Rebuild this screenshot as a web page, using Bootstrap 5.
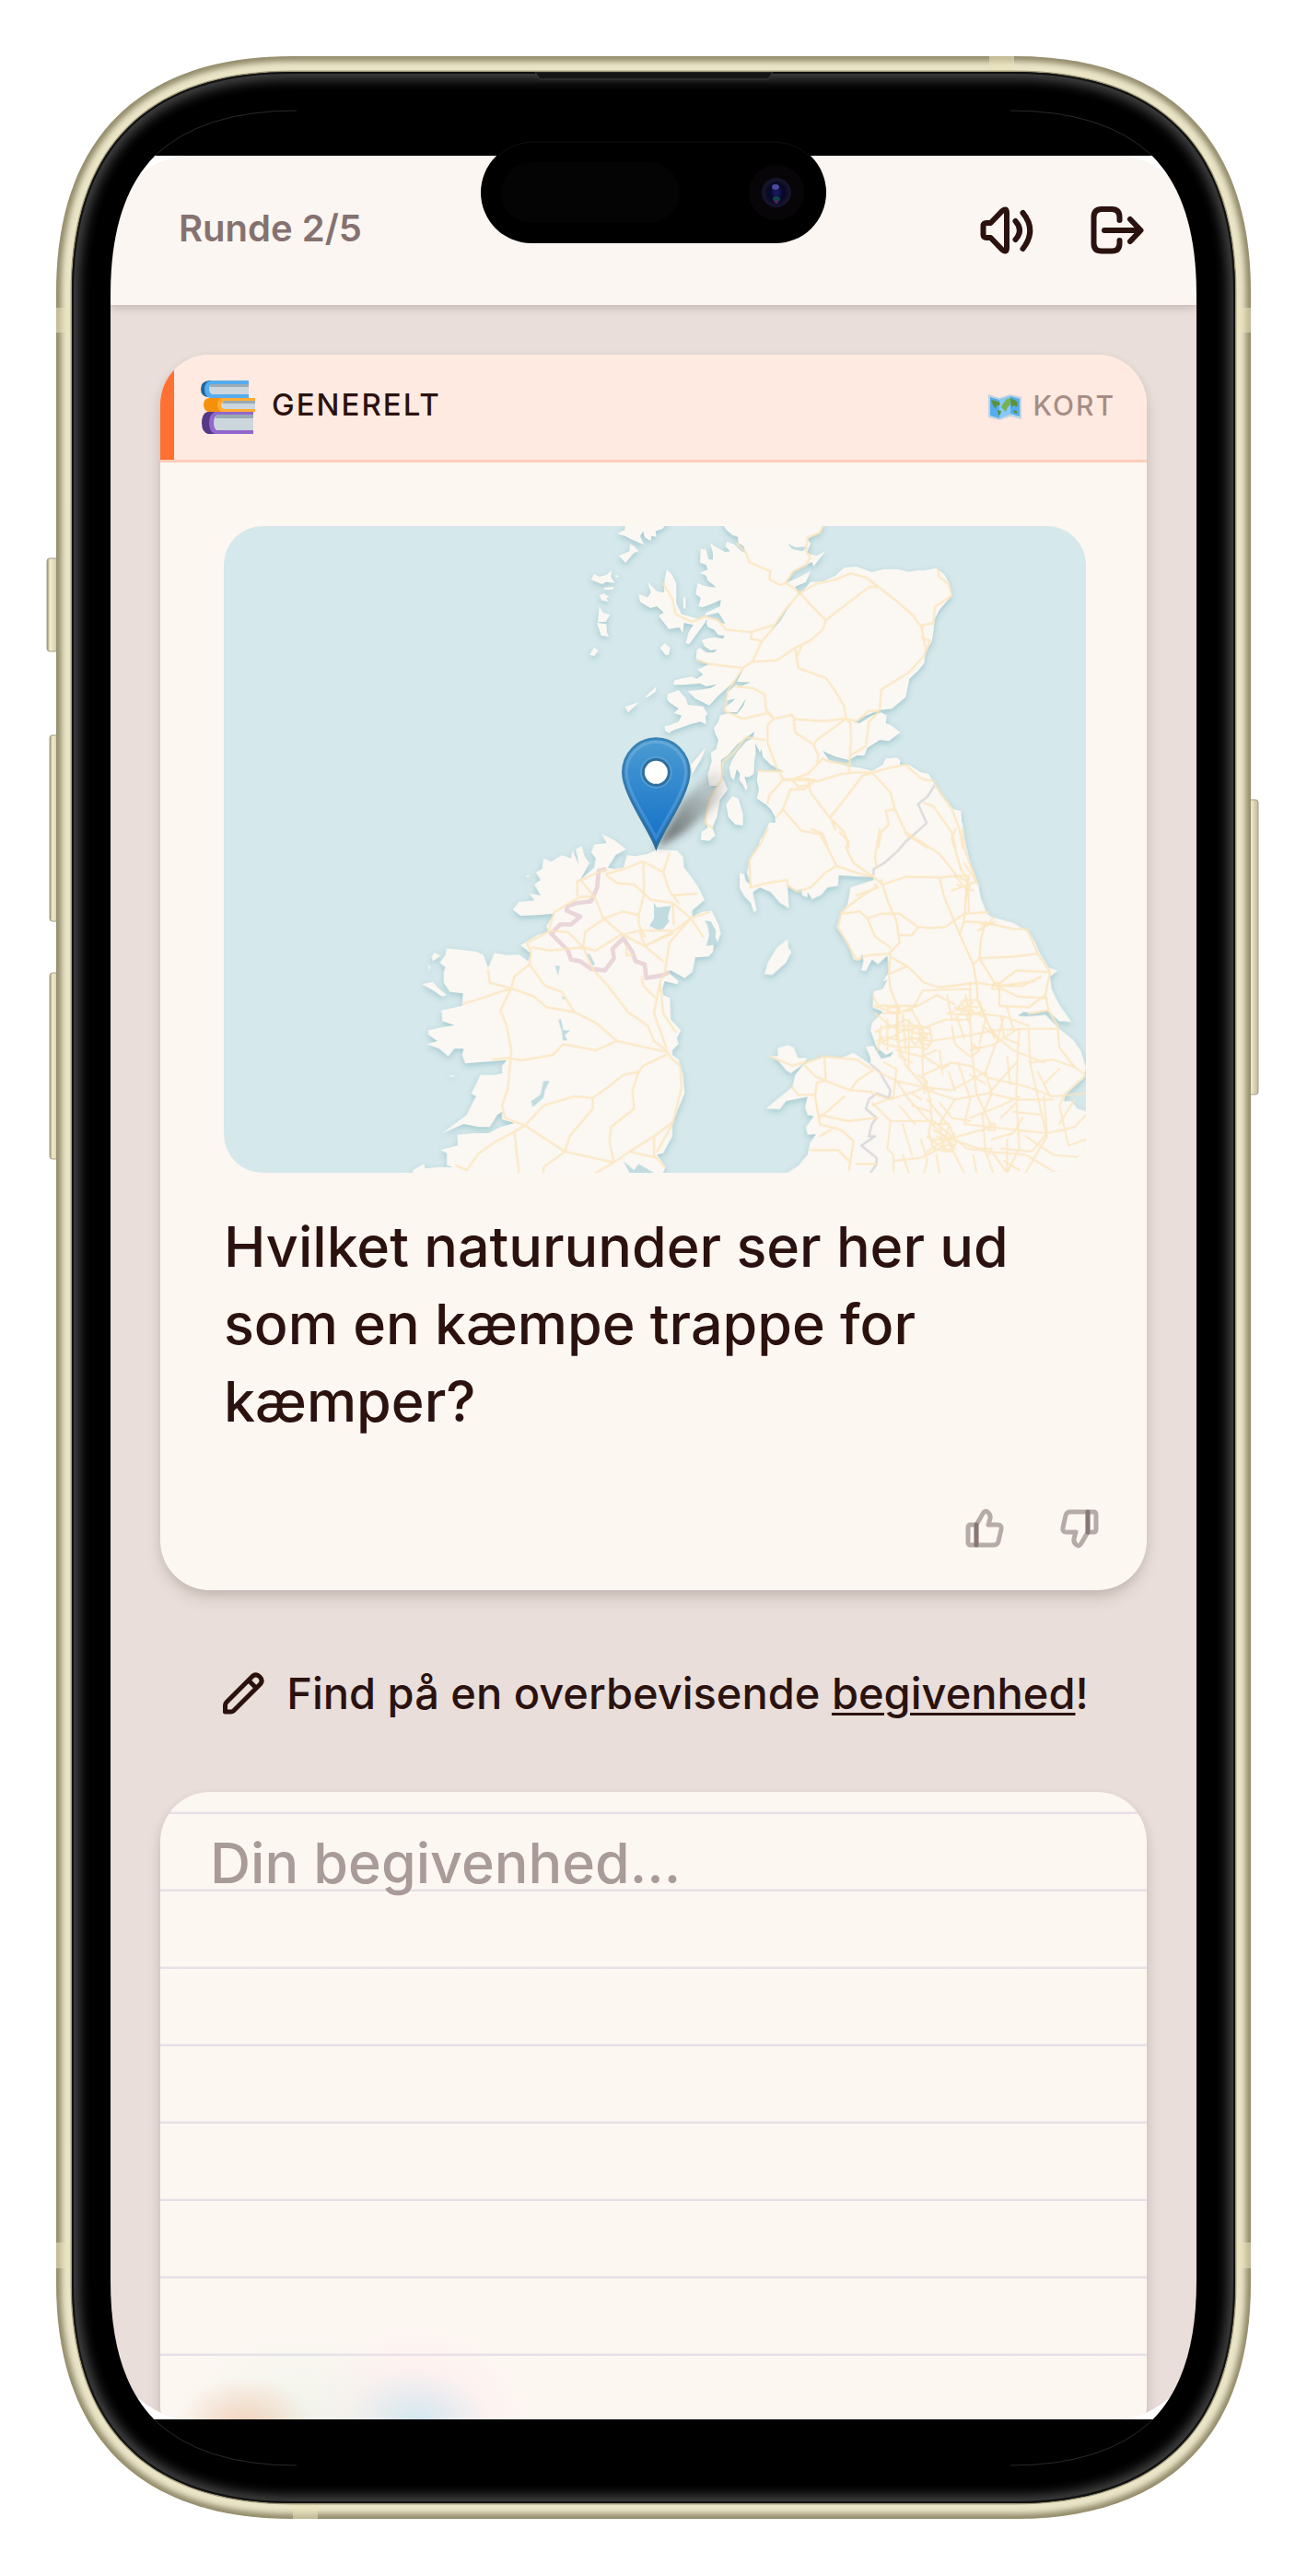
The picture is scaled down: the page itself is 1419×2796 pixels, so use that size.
<!DOCTYPE html>
<html lang="da">
<head>
<meta charset="utf-8">
<meta name="viewport" content="width=device-width, initial-scale=1">
<title>Runde 2/5</title>
<link href="https://cdn.jsdelivr.net/npm/bootstrap@5.3.0/dist/css/bootstrap.min.css" rel="stylesheet">
<style>
:root{--ink:#2b120f;--paper:#fdf7f2;--soft:#e9deda}
body{font-family:Inter,"Noto Sans",sans-serif;color:var(--ink);background:#fff}
.stage{padding:61px}
.phone{width:100%;max-width:1297px;aspect-ratio:1297/2673;min-height:0;padding:108px 59px}
.phone-shell{inset:0;width:100%;height:100%;overflow:visible;pointer-events:none;z-index:5}
.screen{flex:1 1 0;min-height:0;background:#fff}
.app{height:100%;border-radius:90px;background:var(--soft)}
.topbar{flex:none;height:162px;padding:0 54px 0 74px;background:#fbf6f1;box-shadow:0 3px 9px rgba(60,45,30,.22);z-index:1}
.round-label{font-size:40px;line-height:56px;font-weight:600;color:#857270}
.icon-btn{color:var(--ink);line-height:0}
.icon-btn svg,.hint svg{fill:none;stroke:currentColor;stroke-linecap:round;stroke-linejoin:round}
.tools{gap:56px}
.feed{padding:54px 54px 0}
.panel{flex:none;border:0;border-radius:54px;background:var(--paper);box-shadow:0 10px 18px -3px rgba(60,45,30,.18),0 3px 10px rgba(60,45,30,.08);overflow:hidden}
.topic-row{border-bottom:3px solid #fecdb8;background:#ffeae1}
.topic{height:114px;padding:0 34px 0 28px}
.topic-edge{width:15px;background:#ff7033}
.topic-name{font-size:33px;line-height:44px;font-weight:600;letter-spacing:2px;gap:18px}
.topic-name span{font-weight:500;padding-bottom:6px}
.kind{font-size:30px;line-height:44px;font-weight:500;letter-spacing:2px;color:#a68d86;gap:12px}
.question-body{padding:69px 66px 0 69px}
.map{width:100%;border-radius:42px;aspect-ratio:936/702;background:#d5e8eb}
.question{font-size:61px;line-height:84px;font-weight:500;margin:38px 0 0}
.votes{gap:55px;padding:72px 49px 43px}
.votes path{stroke-opacity:.33}
.hint{font-size:47px;line-height:72px;font-weight:500;gap:20px;padding:76px 0 71px;white-space:nowrap}
.hint u{text-decoration-thickness:3px;text-underline-offset:4px}
.ruled{background-image:linear-gradient(#f3eeec 1px,#e6e2e5 1px,#e2e0e6 3px,transparent 3px);background-size:100% 84px;background-position:0 21px}
.answer{height:720px;padding:35px 54px;border:0;background:transparent;font-size:61px;font-weight:500;line-height:84px;color:var(--ink);resize:none;outline:0}
.answer::placeholder{color:#a99b98;opacity:1}
.glow{left:0;right:0;bottom:0;height:130px;pointer-events:none;
background:radial-gradient(75px 55px at 146px 138px,rgba(236,180,145,.55),transparent),radial-gradient(140px 110px at 205px 138px,rgba(225,240,228,.45),transparent),radial-gradient(80px 60px at 331px 136px,rgba(190,230,242,.7),transparent),radial-gradient(125px 110px at 331px 136px,rgba(253,225,235,.6),transparent)}
.land{fill:#fbf8f3;filter:drop-shadow(0 8px 9px #a3c9cf)}
.water{fill:#c1dce0}
.roads{fill:none;stroke:#fbe5bd;stroke-width:7;stroke-linejoin:round;stroke-linecap:round;opacity:.85}
.dense{stroke-width:6}
.border-pink{fill:none;stroke:#ead6da;stroke-width:14;stroke-linejoin:round}
.border-gray{fill:none;stroke:#d9d8da;stroke-width:7;stroke-linejoin:round}
</style>
<script src="https://cdn.jsdelivr.net/npm/bootstrap@5.3.0/dist/js/bootstrap.bundle.min.js"></script>
</head>
<body>
<div class="stage">
<div class="phone position-relative mx-auto d-flex flex-column">
  <div class="screen">
    <div class="app d-flex flex-column overflow-hidden position-relative">
      <header class="topbar d-flex align-items-center justify-content-between position-relative">
        <div class="round-label pb-1">Runde 2/5</div>
        <nav class="tools d-flex" aria-label="Spil">
          <button type="button" class="icon-btn btn border-0 p-0" aria-label="Lyd">
            <svg width="64" height="64" viewBox="0 0 64 64" stroke-width="6"><path d="M10 24H14.5L27 11Q32 7 32 13V51Q32 57 27 53L14.5 40H10Q6.500 40 6.500 36.500V27.500Q6.500 24 10 24ZM41.500 22Q50.500 32 41.500 42M49.500 13Q65 32 49.500 52"/></svg>
          </button>
          <button type="button" class="icon-btn btn border-0 p-0" aria-label="Forlad spil">
            <svg width="64" height="64" viewBox="0 0 64 64" stroke-width="6"><path d="M34.500 21V18Q34.500 9 26 9H15Q6.500 9 6.500 18V46Q6.500 54.500 15 54.500H26Q34.500 54.500 34.500 46V43M18 32H57M46 20L57.500 32L46 44"/></svg>
          </button>
        </nav>
      </header>

      <main class="feed d-flex flex-column flex-grow-1">
        <article class="panel">
          <div class="topic-row d-flex">
            <div class="topic-edge flex-shrink-0"></div>
            <div class="topic flex-grow-1 d-flex align-items-center justify-content-between">
              <div class="topic-name d-flex align-items-center">
                <svg width="60" height="58" viewBox="0 0 60 58" aria-hidden="true">
                  <path fill="#226699" d="M10 0H52V18H8Q1 17 1 9Q1 1 10 0Z"/><path fill="#55acee" d="M12 0H53V19H11Q5 17 5 9Q5 2 12 0Z"/><path fill="#ccd6dd" d="M13 4H53V15H13Q10 13 10 9Q10 5 13 4Z"/><path fill="#99aab5" d="M12 4H53V7H11Z"/>
                  <path fill="#f4900c" d="M10 19H60V34H10Q4 33 4 26Q4 20 10 19Z"/><path fill="#ffac33" d="M24 19H60V34H24Q19 32 19 26Q19 21 24 19Z"/><path fill="#ccd6dd" d="M27 23H60V31H27Q23 30 23 27Q23 24 27 23Z"/><path fill="#99aab5" d="M26 22H60V25H25Z"/>
                  <path fill="#553986" d="M8 34H57V58H9Q2 56 2 46Q2 36 8 34Z"/><path fill="#9266cc" d="M16 34H58V58H16Q10 55 10 46Q10 37 16 34Z"/><path fill="#ccd6dd" d="M18 38H58V54H18Q15 51 15 46Q15 40 18 38Z"/><path fill="#99aab5" d="M18 37H58V41H17Z"/>
                </svg>
                <span>GENERELT</span>
              </div>
              <div class="kind d-flex align-items-center">
                <svg width="36" height="28" viewBox="0 0 36 28" aria-hidden="true">
                  <path fill="#bfd4e0" d="M0 0L12 4L24 0L36 3V27L24 24L12 28L0 25Z"/><path fill="#55acee" d="M2 3L12 6L24 2L34 5V24L24 21L12 26L2 23Z"/><path fill="#88c9f9" d="M12 6L24 2V21L12 26Z"/>
                  <path fill="#5c913b" d="M3 6L8 7L13 9L12 12L9 12L8 16L5 12ZM10 17L14 18L13 22L11 23ZM24 4L30 7L32 9L31 14L28 12L25 14ZM27 17L31 18L31 21L28 20Z"/><path fill="#77b255" d="M16 10L20 5L24 4V11L21 14L19 19L16 16L14 14Z"/>
                </svg>
                <span class="pb-1">KORT</span>
              </div>
            </div>
          </div>
          <div class="question-body">
            <svg class="map d-block" viewBox="0 0 2808 2106" role="img" aria-label="Kort over Irland og Skotland">
              <defs>
                <linearGradient id="pin" x1="0" y1="0" x2="0" y2="1"><stop offset="0" stop-color="#4b9cd2"/><stop offset="1" stop-color="#126fc8"/></linearGradient>
                <linearGradient id="pinEdge" x1="0" y1="0" x2="0" y2="1"><stop offset="0" stop-color="#3883b7"/><stop offset="1" stop-color="#2e6c97"/></linearGradient>
                <linearGradient id="shade" gradientUnits="userSpaceOnUse" x1="1450" y1="1112" x2="1680" y2="850"><stop offset="0" stop-color="#333" stop-opacity=".8"/><stop offset="1" stop-color="#555" stop-opacity="0"/></linearGradient>
                <filter id="soft" x="-30%" y="-30%" width="160%" height="160%"><feGaussianBlur stdDeviation="14"/></filter>
              </defs>
              <g class="land">
                <!-- Great Britain, north -->
                <g transform="translate(1371 -63)">
                  <path d="M258 0V63L265 75L285 92L303 98L305 118L322 128L328 150L315 145L290 122L268 113L262 128L278 145L262 148L230 130L213 118L222 150L222 172L208 172L200 140L182 137L180 182L200 190L205 205L180 215L200 225L205 240L232 262L215 262L185 255L172 248L166 285L182 297L175 325L190 327L215 318L248 303L245 325L200 345L195 355L240 345L250 360L262 380L245 378L230 365L195 357L160 375L205 370L200 380L207 392L225 400L240 418L260 420L255 430L225 425L205 428L185 435L195 455L215 468L235 465L225 475L200 475L180 460L170 465L167 495L190 505L210 512L172 530L190 547L170 560L150 553L97 565L93 580L130 580L180 575L200 585L235 578L215 590L170 598L140 600L165 625L210 647L240 615L290 570L322 528L300 570L345 572L310 585L297 580L270 605L265 632L295 625L280 640L258 655L265 668L300 670L330 625L320 650L300 675L270 672L245 680L240 700L225 720L230 740L240 760L232 790L215 800L218 830L205 870L210 910L235 908L250 880L248 825L270 810L300 775L340 745L358 733L350 755L330 765L300 800L285 825L275 850L280 880L290 890L300 855L310 870L308 890L320 905L330 925L335 915L325 880L340 880L355 870L357 830L362 800L360 770L375 800L392 762L380 790L385 815L410 840L450 862L400 862L370 860L365 890L372 920L365 950L395 970L410 985L425 1010L425 1035L400 1055L375 1085L370 1110H1043L1035 1060L1030 990L1005 985L990 965L965 940L945 905L925 870L900 865L860 840L830 840L833 825L820 817L785 820L775 840L740 860L700 850L660 845L600 825L580 795L600 805L625 815L665 825L690 810L715 810L725 785L765 760L795 763L833 735L800 710L785 705L788 680L770 670L740 680L700 705L682 702L720 680L765 662L805 658L850 620L862 560L890 535L910 510L915 470L935 440L940 410L945 365L960 335L1000 290L990 245L975 220L950 200L910 208L890 207L860 212L820 203L780 203L740 213L690 195L650 198L620 225L580 243L540 245L510 280L500 285L490 260L525 245L540 210L500 230L460 248L485 208L525 190L545 180L550 195L588 145L560 160L540 155L528 150L540 120L530 105L570 85L582 63V0Z"/>
                  <path d="M248 870L270 920L245 955L235 1010L220 1045L230 1070L210 1088L182 1085L185 1060L205 1045L198 1020L200 980L215 950L235 915ZM265 970L285 942L305 950L320 1000L320 1038L295 1035L272 1010Z"/>
                  <path d="M65 235L72 205L88 220L103 250L103 315L120 350L200 372L180 400L145 448L133 445L142 410L158 385L128 378L124 410L112 393L78 398L45 355L62 345L40 325L18 330L-15 310L-20 285L10 295L20 280L10 245L40 275L62 280ZM125 300L133 292V332L126 330ZM50 460L65 445L83 460L78 483L68 484Z"/>
                  <path d="M75 610L110 598L135 625L140 645L190 650L205 675L198 682L200 708L180 700L150 708L100 725L78 735L65 715L80 712L110 700L120 680L95 672L110 658L78 635ZM198 785L150 840L155 870L185 820Z"/>
                </g>
                <!-- Hebrides -->
                <g transform="translate(-39 -63)"><path d="M1320 88L1345 75L1350 30H1500L1468 72L1445 80L1448 98L1432 95L1430 112L1410 100L1405 80L1395 95L1407 123L1392 118L1370 108L1345 95ZM1362 122L1375 128L1390 145L1375 150L1347 183L1326 160L1360 145ZM1235 238L1245 218L1262 228L1285 222L1302 207L1300 228L1312 248L1285 245L1270 252ZM1312 222L1327 225L1318 232ZM1276 264L1310 260L1305 270H1280ZM1262 288L1275 283L1295 293L1285 298L1292 308L1270 305ZM1262 325L1275 345L1297 352L1283 375L1257 376ZM1254 378L1285 382L1287 408L1293 423L1268 420ZM1245 458L1259 468L1246 486L1230 482ZM1410 620L1448 585L1445 602L1418 622ZM1345 652L1392 636L1375 652L1357 670ZM1483 612H1510V640L1484 630ZM1475 715L1500 720L1490 738L1476 728Z"/></g>
                <!-- Great Britain, south -->
                <g transform="translate(1371 987)">
                  <path d="M405 -20L395 0L375 50L345 95L332 140L345 180L330 170L322 145L308 143V190L325 220L345 240L355 270L365 265L352 205L375 190L410 205L440 240L470 258L465 180L490 203L510 195L512 215L530 222V205L545 228L575 215L595 190L630 185L632 150L700 155L745 155V165L700 180L685 185L670 190L660 245L640 275L625 320L665 375L680 425L700 428L708 405L712 430L705 460L720 462L740 425L760 440L790 412L795 465L775 495L790 490L775 520L745 528L742 580L775 595L740 630L735 655L755 710L785 735L810 725L800 740L770 748L745 705L720 708L735 745V765L680 728L640 745L585 740L540 755L515 768L490 800L480 840L430 880L395 910L440 912L460 885L530 872L522 905L530 930L550 935L525 970L530 995L558 993L538 1020L530 1060L500 1095L465 1119V1200H1500V920L1437 918L1410 910L1390 885H1365L1370 865L1430 810L1437 775L1420 720L1395 685L1350 650L1305 605L1240 610L1215 607L1235 595L1270 600L1310 590L1350 625L1390 628L1350 570L1325 520L1320 480L1345 460L1315 450L1285 400L1270 365L1250 335L1200 305L1130 285L1115 275L1095 225L1085 175L1060 110L1045 50L1035 -20Z"/>
                  <path d="M433 712L465 703L485 710L500 745L530 745L510 770L475 795L460 785L435 755L410 740L433 738ZM390 472L400 435L430 385L465 358L468 385L478 400L460 435L415 475Z"/>
                </g>
                <!-- Ireland -->
                <g transform="translate(-39 987)">
                  <path d="M1270 15L1310 35L1350 65L1315 85L1290 125L1310 130L1340 125L1352 85L1380 88L1420 80L1450 65L1515 70L1535 90L1538 125L1565 160L1585 190L1605 230L1565 265V285L1595 270L1628 265L1650 310L1658 340L1645 375L1635 375L1632 400L1618 415L1575 418L1565 465L1540 485L1495 460L1485 465L1520 495L1515 505L1475 495L1468 520L1470 540L1492 550L1495 620L1528 655L1515 680L1520 700L1500 720V735L1520 750L1535 800L1540 860L1515 920L1500 960V1000L1470 1055L1450 1060L1478 1100L1470 1119V1180H640L655 1110L690 1090L695 1105L740 1100H785L765 1095V1055L745 1045L800 1030V995L850 990H900L940 970L985 957L945 945V920L930 930L905 970H870L820 960L750 990L830 930L860 870L845 860L875 800H920L945 795V770L960 752L880 758L825 763L815 735L820 715H790L770 740L740 715L700 700L735 690L705 670V655L750 645L790 638L750 625L748 590L815 575L818 535L775 530L755 500V465L760 450L742 435L760 410L765 388L860 398L885 410L900 450L920 403L960 410L1000 408L1030 430L1040 405L1005 378L1060 345L1095 335L1090 315L1115 275L1060 280L1005 282L980 262L1000 237L1050 232L1035 210L1070 215L1050 180L1070 165L1055 140L1075 130L1080 95L1105 105L1140 85L1170 95L1175 70L1195 115L1185 65L1205 55L1215 90L1230 110L1200 165L1245 125L1250 95L1235 75L1245 50L1285 45Z"/>
                  <path d="M715 415L725 402L745 412L720 430ZM685 505L720 497L735 515L765 540L750 545L720 525ZM770 800L790 803L785 808ZM1022 150L1035 152L1028 158ZM705 440L712 450L708 465Z"/>
                </g>
              </g>
              <g class="water">
                <g transform="translate(1371 987)"><path d="M30 240L40 255L85 250L75 290L80 300L60 325L45 330L15 315L30 290ZM195 298L215 300L232 330L230 350L240 375L200 380L210 345L205 315Z"/></g>
                <g transform="translate(-39 987)"><path d="M1220 408L1230 405L1248 440L1240 445ZM1118 445H1133L1128 478ZM1128 620L1137 618L1145 655H1168L1150 670L1158 688H1143L1140 660ZM1080 820H1100L1085 850L1080 875L1045 905L1040 885L1070 865ZM1340 1080L1360 1119H1440L1390 1090L1375 1110ZM1138 543L1152 550L1145 556Z"/></g>
                <g transform="translate(1371 -63)"><path d="M475 318L440 375L410 408L420 390L455 340ZM370 462L348 490L365 468ZM465 120L490 132L528 130L515 145L480 138Z"/></g>
              </g>
              <g class="border-pink" transform="translate(-39 987)"><path d="M1285 130L1260 135L1255 190L1235 235L1190 240L1160 250L1155 265L1200 285L1170 310L1135 310L1105 340L1160 395L1170 425L1200 430L1235 455L1280 460L1310 420L1305 390L1340 355L1370 400L1380 430L1410 440L1415 485L1470 475L1490 465"/></g>
              <g class="border-gray" transform="translate(1371 987)"><path d="M945 -145L920 -105L890 -82L918 -20L885 10L850 40L825 70L780 110L745 130V150M735 765L765 790L800 850L795 875L755 860L730 880L720 910L755 940L740 960L730 1000L750 1000L705 1030L755 1070V1090L735 1119"/></g>
              <g class="roads">
                <g transform="translate(1371 -63)"><path d="M300 120L330 150L340 180L385 200L410 210L405 235L440 255L460 248L505 280M582 60L570 85L530 100L525 145L540 165L525 190L485 210L460 245M505 280L560 250L620 238L670 217L720 230L760 260L830 315L870 350L900 390L910 435L915 465M505 280L540 320L590 370L580 400L540 435L490 460L430 500L350 505M590 370L640 330L730 262L760 260M955 205L960 230L990 250L1000 290L945 325L940 380L905 385L905 430L930 435L910 485L860 540L770 595L765 665L730 700L720 780L670 810L665 860M505 280L450 345L410 405L380 440L350 505L320 525L270 600L260 665L320 690L400 672L420 690L480 678M420 385L345 408L265 400L240 370L195 357L155 375L100 350L90 300L60 250M350 408L345 430L385 438M170 500L210 512L320 525M490 460L500 525L590 558L620 600L650 650L655 690L580 698L490 692L475 676M510 455L495 490M655 690L560 760L550 775L565 810M485 692L490 735L550 775M295 585L350 590L390 610L395 660L420 690L400 710V770L430 850L450 885M655 690L670 705L672 760L665 860M655 690L690 698L730 665H765M370 860L450 862M250 890L255 830L290 800L330 750L390 760M485 885L530 870L580 820L600 830L670 840M565 810L562 835M450 888L530 885L560 895L640 870L690 865L740 865L800 850L850 840L900 885L945 895M735 870L710 875L660 940L605 1010M740 865L800 930L815 985L855 1070L920 1110M450 888L485 890H555L520 920H475L450 985L430 1010M480 890L500 912L540 905M530 885L540 930L600 1010L650 1060L665 1110M450 985L510 1055L570 1065L595 1110M450 890L405 940L400 965M945 905L1000 985L1025 1050L1035 1110M910 965L940 975L1000 1060L1012 1110M815 985L785 990L795 1035L770 1060L760 1110M605 1010L620 1050M250 890L210 950L195 1030L220 1045"/></g>
                <g transform="translate(1371 987)"><path d="M400 0L375 50L340 100L345 190L400 175L465 165V185L500 203L540 190L590 140L625 120M545 0L580 15L600 70L625 120L700 145L745 155L775 180M635 10L665 40L655 60L680 110L745 155M765 0L750 90L755 125M850 10L960 80L1015 150L1050 170M1012 0L1000 30L1030 130M1035 0L1040 60L1080 170M775 180L850 155L960 157L1050 150M770 165L790 230L820 300L830 370L800 400L795 470L800 520L825 580L820 680M750 190L690 230L640 270L630 320L690 425L730 410L800 405M640 275L700 268L725 290L770 275L830 275L890 318L930 322L980 318L1040 275L1120 270M750 180L760 190L690 215M890 318L870 345H830M960 157L975 220L1000 280L1025 340L1070 440L1080 500L1085 560L1140 680M725 290L750 350L800 385M800 415L860 450L910 500L960 515L1080 500L1150 510L1270 495M1050 170L1040 300L1110 305L1200 325L1245 325M1025 345L1040 300M1110 300L1095 360L1090 420L1145 510L1210 460L1320 465M1070 440L1090 420L1200 415L1280 405M1245 325L1280 405L1320 465L1305 540L1315 590M1145 510L1215 545L1310 550M1155 510V575L1250 580L1305 540M1145 510L1230 510L1290 480M800 470L850 448M745 545L760 575L890 575M1315 590L1345 640L1350 710L1400 775M1250 600L1315 590M410 740L480 770L540 755L585 740L690 750L735 780M520 768L555 805L590 818M585 740L590 818L560 825L555 870L570 960L640 980L680 1015L665 1110M480 840L500 865H555M750 780L690 820L670 850M590 820L670 850L740 855M570 940L650 870M540 1045H630L665 1080M570 930L660 950L760 940M570 1000L620 970M690 1090H755"/></g>
                <g transform="translate(-39 987)"><path d="M1100 330L1160 335L1210 385L1250 395L1330 345L1395 330H1500M1025 370L1095 335L1115 270L1200 220H1245M1190 215V170L1285 130M1205 170L1245 220M1285 145L1340 130L1405 105L1470 140L1490 200L1520 240M1285 150L1320 175L1375 180L1430 230L1500 240L1560 290M1245 215L1275 290L1340 345L1410 380L1470 430M1405 105L1408 210L1390 280L1340 268L1280 290L1215 335L1210 385L1240 455L1290 510L1355 595L1420 640L1440 690L1480 720M1025 370L1040 400L1035 440M1045 385L1100 395L1210 385M900 460L905 500L975 518L1050 545L1090 580L1180 595L1250 630L1320 690L1480 725M820 568L880 550L975 518L985 480L1035 440L1085 510L1140 530L1180 595M975 518L940 590L960 640L975 720L965 840L945 900L955 940L1020 965M915 750L970 745L1010 752L1110 735L1145 700L1250 720L1320 690M1480 735L1405 770L1390 790L1340 800L1290 840L1240 875L1180 870L1080 900L1020 965L1150 1050L1310 1085M1020 965L985 985L920 1020L870 1055L830 1110L795 1095M985 985L1000 1119M1240 875V910L1165 1000L1150 1050L1080 1100V1119M1390 790L1370 850L1375 910L1300 970L1295 1020L1310 1085L1250 1119M1310 1085L1360 1050L1440 1000L1500 955M1440 1000V1060L1475 1100M1360 1050L1450 1070M1480 720L1500 750L1525 770L1530 840L1500 960L1450 1050M1475 470L1460 495L1440 600L1480 710M1460 495L1470 600L1510 660M1400 480L1405 510L1445 550M1560 290L1490 370L1475 470M1560 290L1620 270M1560 290L1500 335L1410 380M1470 140L1490 80M1560 290L1600 350M1395 335L1410 380L1500 340M1490 200L1500 215L1580 210M1500 240L1505 310M1350 380V410H1370M1390 280V310L1410 350"/></g>
              </g>
              <g class="roads dense" transform="translate(1371 987)">
                <path d="M775 600L870 590L905 650V800L930 880L935 960L985 1010M870 590L905 525L1060 520M745 575L820 600L900 570L950 540L1010 570M1060 500V620L1065 720L1080 860L1130 970M930 690L1060 670L1140 655L1220 650H1340M905 800L1000 760L1060 770L1120 810L1250 840L1330 870L1437 860M740 890L800 950L930 950M800 950L790 1040L810 1060V1119M810 1080L900 1070L1000 1020M1250 650L1255 760L1300 960L1310 1000L1240 1119M1255 760L1330 750L1400 775L1437 800L1370 860L1350 900L1380 1030L1437 1010M1220 650L1215 720L1210 860L1220 1040L1180 1119M1150 680L1110 790L1130 860L1100 930L1110 1050L1135 1119M1110 790L1000 850L910 840L820 820M1000 1010L1120 1050L1240 1060L1340 1119M985 1010L1130 970L1310 990L1400 970L1437 930M985 1010L1040 1119M935 960L860 880L820 820L760 790M1150 680L1200 720L1300 760M1060 720L1140 700L1215 650M1170 610L1150 680M1085 600L1170 610L1250 640M1060 620L980 620L900 650M985 540L1000 620M820 680L850 770L905 830L940 850M740 860L800 880L905 845L1010 880L1120 860L1210 880L1330 880M1010 880L960 960M1020 760L1060 880L1040 960L1130 970M870 900L930 920M780 760L820 780L810 870L740 900M1210 760L1120 860M1160 610L1170 680L1220 700M1300 870L1310 990M1310 990L1260 1050L1160 1040M1160 940L1210 890M1180 1010V1119M900 1010L920 1080L910 1119M920 880L985 960M1060 940L1160 900L1220 870M1050 1040L1130 1050L1180 1119M750 600L800 640L900 640M790 650L850 620L910 660M1000 760L970 780L910 740M820 720L900 740L950 720"/>
                <path d="M750 660L790 640L840 655L880 650M755 690L790 675L830 690L870 680L930 690M760 655L780 700L830 710L880 710M770 640L760 720M790 620V720M820 590L830 740L870 760M840 600L850 720M760 700L800 680L850 650L900 670M870 650L895 640L930 650L935 690L920 715L890 710L870 690ZM880 665H930M885 695L925 665M900 640L910 720M890 640L900 700L930 700M870 680L920 680M1000 600L1040 560L1080 555M1010 580L1050 590L1100 610M1030 560L1050 610L1060 640M1045 540L1055 600M1010 620L1050 575L1085 580M1020 590L1070 565M985 600L1060 605L1110 590M1040 555L1075 600M930 960H990L1015 1020L990 1050L940 1040L925 990ZM940 980L1000 1010M950 1000L985 1015L1010 990M940 1010H1015M960 960L975 1050M980 1000L1010 1040M920 1000L960 1030L1000 1050M990 970L970 1030M940 950L1000 1000L1050 1040M920 1050L980 1010M1070 700L1090 720L1065 740M1065 710H1100M1100 640L1150 680L1130 650M790 580H830V600H800ZM1030 130L1060 180L1045 230M1010 150L1050 200M1000 200L1080 170M1040 110L1085 180M1055 150V270M1015 180L1070 200M1095 310L1120 310L1135 285M1085 330L1140 300M1140 500H1155V520H1130ZM890 800L920 820L910 860M1120 960H1140V980H1120M1100 1040H1130L1120 1060M1170 1080L1220 1110M860 620L860 780M960 720L970 800M990 790L1010 850M1060 800L1110 830M870 860L900 880M1090 560L1110 620L1090 700"/>
                <path d="M1000 640L1010 700L1060 740M1020 620L1040 680M1180 740L1190 830M1280 790L1320 870M1350 780L1300 830M1200 920L1290 930M1130 1010L1200 990L1230 940M840 960L870 1060M830 900L880 960M1400 880L1350 960M1240 1000L1330 1060L1437 1070M960 890L1000 940L1060 950M1180 580L1200 650M950 1060L960 1119M1070 1060L1080 1119M840 1060L860 1119"/>
              </g>
              <!-- pin -->
              <g transform="translate(-39 -63)">
                <path d="M1447 1112L1530 960L1640 850L1690 880L1650 960L1540 1060Z" fill="url(#shade)" filter="url(#soft)"/>
                <path d="M1447 1110C1425 1050 1339 935 1339 865A108 110 0 0 1 1555 865C1555 935 1469 1050 1447 1110Z" fill="url(#pin)" stroke="url(#pinEdge)" stroke-width="8"/>
                <path d="M1447 1078C1420 1022 1350 925 1350 865A97 99 0 0 1 1544 865C1544 925 1474 1022 1447 1078Z" fill="none" stroke="#fff" stroke-opacity=".14" stroke-width="10"/>
                <circle cx="1447" cy="865" r="52" fill="#62a5d5" opacity=".7"/><circle cx="1447" cy="865" r="42" fill="#fff" stroke="#2e6f9f" stroke-width="9"/>
              </g>
            </svg>
            <h1 class="question">Hvilket naturunder ser her ud som en kæmpe trappe for kæmper?</h1>
          </div>
          <div class="votes d-flex justify-content-end">
            <button type="button" class="icon-btn btn border-0 p-0" aria-label="Godt spørgsmål">
              <svg width="48" height="48" viewBox="0 0 48 48" stroke-width="5"><path d="M15 20L22 8Q24 4 27 6Q31 9 30 13L28 20H38Q43 20 42 25L39 38Q38 42 34 42H15Z"/><path d="M15 20H9Q6 20 6 23V39Q6 42 9 42H15Z"/></svg>
            </button>
            <button type="button" class="icon-btn btn border-0 p-0" aria-label="Dårligt spørgsmål">
              <svg width="48" height="48" viewBox="0 0 48 48" stroke-width="5"><g transform="rotate(180 24 24)"><path d="M15 20L22 8Q24 4 27 6Q31 9 30 13L28 20H38Q43 20 42 25L39 38Q38 42 34 42H15Z"/><path d="M15 20H9Q6 20 6 23V39Q6 42 9 42H15Z"/></g></svg>
            </button>
          </div>
        </article>

        <label for="answer" class="hint d-flex align-items-center justify-content-center">
          <svg width="54" height="54" viewBox="0 0 54 54" stroke-width="5" aria-hidden="true"><path d="M7.500 47V40Q7.500 38 9 36.500L37 8.500Q41 5 45 9Q49 13 45.500 17L17.500 45Q16 47 14 47ZM33 13L41 21"/></svg>
          <span>Find på en overbevisende <u>begivenhed</u>!</span>
        </label>

        <div class="panel ruled">
          <textarea id="answer" class="answer d-block w-100" placeholder="Din begivenhed..."></textarea>
        </div>
      </main>
      <div class="glow position-absolute"></div>
    </div>
  </div>

  <svg class="phone-shell position-absolute" viewBox="61 61 1297 2673" preserveAspectRatio="none" aria-hidden="true">
    <defs>
      <path id="outer" d="M61 317C61 151 151 61 317 61H1102C1268 61 1358 151 1358 317V2478C1358 2644 1268 2734 1102 2734H317C151 2734 61 2644 61 2478Z"/>
      <path id="inner" d="M78 318C78 160 160 78 318 78H1101C1259 78 1341 160 1341 318V2477C1341 2635 1259 2717 1101 2717H318C160 2717 78 2635 78 2477Z"/>
      <path id="aperture" d="M120 320C120 183 183 120 320 120H1099C1236 120 1299 183 1299 320V2476C1299 2613 1236 2676 1099 2676H320C183 2676 120 2613 120 2476Z"/>
      <clipPath id="innerClip"><use href="#inner"/></clipPath>
      <clipPath id="outerClip"><use href="#outer"/></clipPath>
      <clipPath id="viewClip"><rect x="120" y="169" width="1179" height="2457"/></clipPath>
      <mask id="hole" maskUnits="userSpaceOnUse" x="40" y="40" width="1340" height="2720"><rect x="40" y="40" width="1340" height="2720" fill="#fff"/><g clip-path="url(#viewClip)"><use href="#aperture" fill="#000"/></g></mask>
      <filter id="blur2" x="-5%" y="-5%" width="110%" height="110%"><feGaussianBlur stdDeviation="3"/></filter>
      <filter id="blur8" x="-5%" y="-5%" width="110%" height="110%"><feGaussianBlur stdDeviation="7"/></filter>
      <linearGradient id="key" x1="0" x2="1" y1="0" y2="0"><stop offset="0" stop-color="#9a9474"/><stop offset=".25" stop-color="#f2ecd0"/><stop offset="1" stop-color="#c0b896"/></linearGradient>
      <radialGradient id="lens"><stop offset="0" stop-color="#1c1c6a"/><stop offset=".6" stop-color="#070725"/><stop offset="1" stop-color="#101026"/></radialGradient>
    </defs>
    <g fill="url(#key)" stroke="#a59e80">
      <rect x="51" y="606" width="14" height="101" rx="3"/><rect x="54" y="798" width="12" height="202" rx="3"/><rect x="54" y="1056" width="12" height="202" rx="3"/><rect x="1355" y="868" width="11" height="320" rx="3"/>
    </g>
    <g mask="url(#hole)">
      <g clip-path="url(#outerClip)">
        <use href="#outer" fill="#ebe5c8"/>
        <use href="#outer" fill="none" stroke="#8f8868" stroke-width="11" filter="url(#blur2)"/>
        <g fill="#e9e2b9" opacity=".55"><path d="M61 334H78V361H61ZM1341 334H1358V361H1341ZM61 2434H78V2462H61ZM1341 2434H1358V2462H1341ZM1074 61H1101V78H1074ZM318 2717H345V2734H318Z"/></g>
        <use href="#inner" fill="none" stroke="#a59e7c" stroke-width="3"/>
      </g>
      <use href="#inner"/>
      <g clip-path="url(#innerClip)">
        <use href="#inner" fill="none" stroke="#565656" stroke-width="13" filter="url(#blur8)"/>
        <use href="#inner" fill="none" stroke="#111" stroke-width="4"/>
        <path d="M581 78L586 86H834L839 78Z" fill="#151515" stroke="#3c3c3c"/>
      </g>
      <path d="M168 169Q220 120 322 120M1251 169Q1199 120 1097 120M168 2627Q220 2676 322 2676M1251 2627Q1199 2676 1097 2676" fill="none" stroke="#2a2a2a"/>
    </g>
    <rect x="522" y="154" width="375" height="110" rx="55"/>
    <path d="M541 169Q556 155 577 154H842Q863 155 878 169" fill="none" stroke="#111"/>
    <rect x="544" y="176" width="194" height="66" rx="33" fill="#040404"/>
    <circle cx="843" cy="209" r="30" fill="#080508"/><circle cx="843" cy="209" r="16" fill="#14142c"/><circle cx="843" cy="209" r="13" fill="url(#lens)"/><ellipse cx="842" cy="203" rx="4" ry="3" fill="#4a4a9a"/><ellipse cx="843" cy="216" rx="4" ry="3" fill="#0d4450"/><circle cx="843" cy="219" r="2" fill="#5c1d5c"/>
  </svg>
</div>
</div>
</body>
</html>
